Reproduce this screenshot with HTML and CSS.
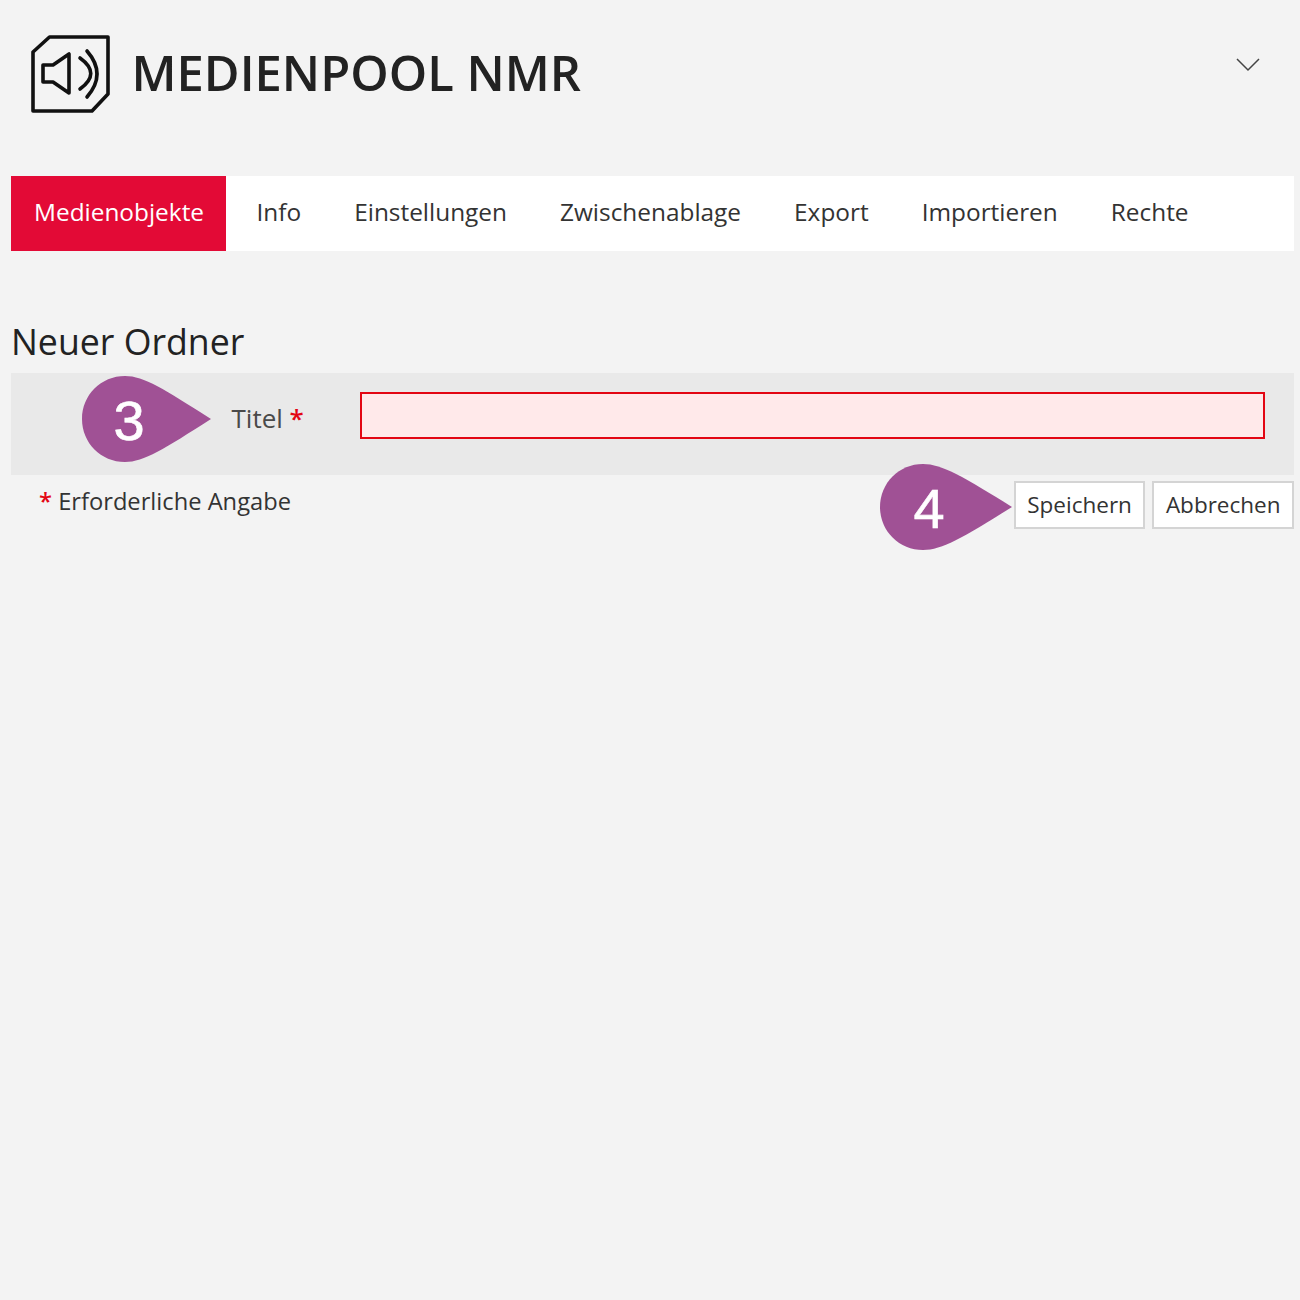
FILE: index.html
```html
<!DOCTYPE html>
<html lang="de">
<head>
<meta charset="utf-8">
<title>Medienpool NMR</title>
<link rel="stylesheet" href="styles.css">
</head>
<body>
<header class="header">
  <div class="brand">
    <svg class="logo" width="80" height="80" viewBox="0 0 80 80" fill="none" stroke="#111" stroke-width="3.6" stroke-linejoin="round" stroke-linecap="round">
      <path d="M19.500 2H78V59L62 76H3V17Z"/>
      <path d="M13 30H23L39 19V58L23 47H13Z"/>
      <path d="M50 23Q71.500 38.500 50 54"/>
      <path d="M57 16Q77 39 57 62"/>
    </svg>
    <h1 class="brand-title">MEDIENPOOL NMR</h1>
  </div>
  <svg class="chevron" width="24" height="14" viewBox="0 0 24 14" fill="none" stroke="#444" stroke-width="1.500"><path d="M1 1L12 12L23 1"/></svg>
</header>
<nav class="tabs">
  <a class="tab tab-active">Medienobjekte</a>
  <a class="tab">Info</a>
  <a class="tab">Einstellungen</a>
  <a class="tab">Zwischenablage</a>
  <a class="tab">Export</a>
  <a class="tab">Importieren</a>
  <a class="tab">Rechte</a>
</nav>
<main class="main">
  <h2 class="page-title">Neuer Ordner</h2>
  <div class="form-row">
    <label class="form-label">Titel <span class="req">*</span></label>
    <div class="form-input"></div>
  </div>
  <div class="form-footer">
    <p class="note"><span class="req">*</span> Erforderliche Angabe</p>
    <div class="actions">
      <button class="btn">Speichern</button>
      <button class="btn">Abbrechen</button>
    </div>
  </div>
</main>
<div class="marker marker-3">
  <svg width="130" height="86" viewBox="0 0 130 86"><path class="drop" d="M43 0C62 0 82 13 129 43C82 73 62 86 43 86C19 86 0 67 0 43C0 19 19 0 43 0Z"/></svg>
  <span class="marker-num">3</span>
</div>
<div class="marker marker-4">
  <svg width="132" height="86" viewBox="0 0 132 86"><path class="drop" d="M43 0C62 0 84 13 132 43C84 73 62 86 43 86C19 86 0 67 0 43C0 19 19 0 43 0Z"/></svg>
  <span class="marker-num">4</span>
</div>
</body>
</html>
```
FILE: styles.css
```css
* { box-sizing: border-box; }
html, body { margin: 0; padding: 0; }
body {
  min-height: 1300px;
  background: #f3f3f3;
  font-family: "Open Sans", "Liberation Sans", sans-serif;
  color: #222;
  position: relative;
}
.header {
  height: 176px;
  display: flex;
  justify-content: space-between;
  align-items: flex-start;
  padding: 35px 40px 0 30px;
}
.brand { display: flex; align-items: flex-start; gap: 21.500px; }
.logo { display: block; }
.brand-title {
  margin: 0;
  font-size: 48.900px;
  line-height: 74px;
  font-weight: 600;
  color: #222;
}
.chevron { margin-top: 23px; }
.tabs {
  margin: 0 6px 0 11px;
  height: 75px;
  background: #fff;
  display: flex;
  align-items: stretch;
  gap: 8px;
}
.tab {
  display: flex;
  align-items: center;
  padding: 0 22px 4px 23px;
  font-size: 24.400px;
  color: #333;
}
.tab-active {
  padding-right: 21.500px;
  background: #e30a36;
  color: #fff;
  font-weight: 500;
}
.main { margin: 0 6px 0 11px; padding-top: 58px; }
.page-title {
  margin: 0;
  font-size: 35.700px;
  line-height: 64px;
  font-weight: 400;
  color: #222;
}
.form-row {
  height: 102px;
  background: #e9e9e9;
  display: flex;
  align-items: center;
  padding: 0 29px 18px 220.500px;
}
.form-label {
  width: 128.500px;
  font-size: 26px;
  color: #4a4a4a;
  padding-top: 6px;
}
.req { color: #e30613; font-weight: 600; }
.form-input {
  flex: 1;
  height: 47px;
  background: #ffe9ea;
  border: 2px solid #e30613;
}
.form-footer {
  display: flex;
  justify-content: space-between;
  align-items: flex-start;
  padding-top: 6px;
}
.note {
  margin: 1px 0 0;
  padding-left: 28px;
  font-size: 23.700px;
  line-height: 38px;
  color: #333;
}
.actions { display: flex; gap: 7px; }
.btn {
  height: 48px;
  padding: 0 11.500px 1px;
  background: #fff;
  border: 2px solid #d4d4d4;
  font: 400 22.500px "Open Sans", "Liberation Sans", sans-serif;
  color: #333;
}
.marker { position: absolute; height: 86px; display: flex; align-items: center; }
.marker svg { display: block; }
.drop { fill: #a05195; }
.marker-3 { left: 82px; top: 376px; }
.marker-4 { left: 880px; top: 464px; }
.marker-num {
  position: absolute;
  left: 0;
  padding-top: 2px;
  text-align: center;
  font: 400 56px "Liberation Sans", sans-serif;
  -webkit-text-stroke: 0.6px #fff;
  color: #fff;
}
.marker-3 .marker-num { width: 94px; }
.marker-4 .marker-num { width: 98px; }
```
